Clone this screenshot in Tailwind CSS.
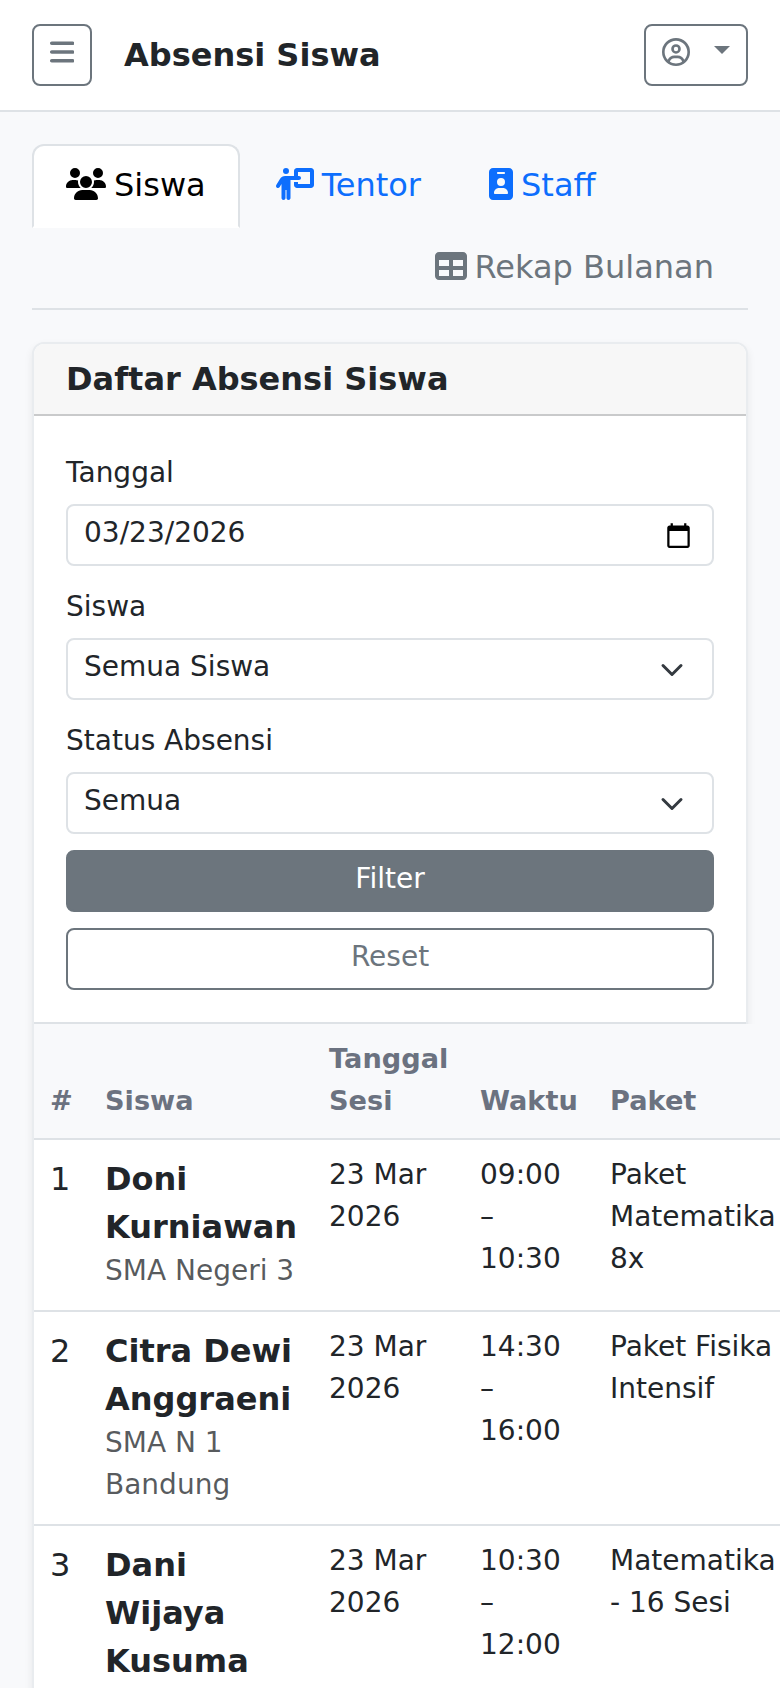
<!DOCTYPE html>
<html lang="id">
  <head>
    <meta charset="UTF-8" />
    <meta name="viewport" content="width=device-width, initial-scale=1.0" />
    <title>Absensi Siswa</title>
    <script src="https://cdn.jsdelivr.net/npm/@tailwindcss/browser@4"></script>
  </head>
  <body
    class="h-[1688px] overflow-hidden bg-[#f8f9fb] font-['DejaVu_Sans',sans-serif] text-[32px] leading-[48px] text-[#212529]"
  >
    <!-- Topbar -->
    <header
      class="flex h-28 items-center justify-between border-b-2 border-[#dee2e6] bg-white px-8"
    >
      <div class="flex items-center gap-8">
        <button
          class="flex h-[62px] w-[60px] justify-center rounded-lg border-2 border-[#6c757d] pt-[11.5px] text-[#6c757d]"
          aria-label="Menu"
        >
          <svg class="h-7 w-[24.5px]" fill="currentColor" viewBox="0 0 448 512">
            <path
              d="M0 96C0 78.3 14.3 64 32 64l384 0c17.7 0 32 14.3 32 32s-14.3 32-32 32L32 128C14.3 128 0 113.7 0 96zM0 256c0-17.7 14.3-32 32-32l384 0c17.7 0 32 14.3 32 32s-14.3 32-32 32L32 288c-17.7 0-32-14.3-32-32zM448 416c0 17.7-14.3 32-32 32L32 448c-17.7 0-32-14.3-32-32s14.3-32 32-32l384 0c17.7 0 32 14.3 32 32z"
            />
          </svg>
        </button>
        <h1 class="font-bold">Absensi Siswa</h1>
      </div>
      <button
        class="flex h-[62px] w-[104px] gap-6 rounded-lg border-2 border-[#6c757d] px-4 pt-[11.5px] text-[#6c757d]"
        aria-label="Akun"
      >
        <svg class="size-7 shrink-0" fill="currentColor" viewBox="0 0 512 512">
          <path
            d="M406.5 399.6C387.4 352.9 341.5 320 288 320l-64 0c-53.5 0-99.4 32.9-118.5 79.6C69.9 362.2 48 311.7 48 256C48 141.1 141.1 48 256 48s208 93.1 208 208c0 55.7-21.9 106.2-57.5 143.6zm-40.1 32.7C334.4 452.4 296.6 464 256 464s-78.4-11.6-110.5-31.7c7.3-36.7 39.7-64.3 78.5-64.3l64 0c38.8 0 71.2 27.6 78.5 64.3zM256 512A256 256 0 1 0 256 0a256 256 0 1 0 0 512zm0-272a40 40 0 1 1 0-80 40 40 0 1 1 0 80zm-88-40a88 88 0 1 0 176 0 88 88 0 1 0 -176 0z"
          />
        </svg>
        <span
          class="mt-[8.5px] h-0 w-0 shrink-0 border-x-8 border-t-8 border-x-transparent border-t-[#6c757d]"
        ></span>
      </button>
    </header>

    <main class="px-8 pt-8">
      <!-- Tabs -->
      <nav class="mb-8 flex flex-wrap border-b-2 border-[#dee2e6]">
        <a
          class="-mb-0.5 flex items-center gap-2 rounded-t-xl border-2 border-[#dee2e6] border-b-white bg-white px-8 pt-[15px] pb-[17px] text-black"
        >
          <svg class="mb-0.5 h-8 w-10" fill="currentColor" viewBox="0 0 640 512">
            <path
              d="M144 0a80 80 0 1 1 0 160A80 80 0 1 1 144 0zM512 0a80 80 0 1 1 0 160A80 80 0 1 1 512 0zM0 298.7C0 239.8 47.8 192 106.7 192l42.7 0c15.9 0 31 3.5 44.6 9.7c-1.3 7.2-1.9 14.7-1.9 22.3c0 38.2 16.8 72.5 43.3 96c-.2 0-.4 0-.7 0L21.3 320C9.6 320 0 310.4 0 298.7zM405.3 320c-.2 0-.4 0-.7 0c26.6-23.5 43.3-57.8 43.3-96c0-7.6-.7-15-1.9-22.3c13.6-6.3 28.7-9.7 44.6-9.7l42.7 0C592.2 192 640 239.8 640 298.7c0 11.8-9.6 21.3-21.3 21.3l-213.3 0zM224 224a96 96 0 1 1 192 0 96 96 0 1 1 -192 0zM128 485.3C128 411.7 187.7 352 261.3 352l117.3 0C452.3 352 512 411.7 512 485.3c0 14.7-11.9 26.7-26.7 26.7l-330.7 0c-14.7 0-26.7-11.9-26.7-26.7z"
            />
          </svg>
          Siswa
        </a>
        <a
          class="-mb-0.5 flex items-center gap-2 border-2 border-transparent px-8 pt-[15px] pb-[17px] text-[#0d6efd]"
        >
          <svg class="mb-0.5 h-8 w-10" fill="currentColor" viewBox="0 0 640 512">
            <path
              d="M192 96a48 48 0 1 0 0-96 48 48 0 1 0 0 96zm-8 384l0-128 16 0 0 128c0 17.7 14.3 32 32 32s32-14.3 32-32l0-288 56 0 64 0 16 0c17.7 0 32-14.3 32-32s-14.3-32-32-32l-16 0 0-64 192 0 0 192-192 0 0-32-64 0 0 48c0 26.5 21.5 48 48 48l224 0c26.5 0 48-21.5 48-48l0-224c0-26.5-21.5-48-48-48L368 0c-26.5 0-48 21.5-48 48l0 80-76.9 0-65.9 0c-33.7 0-64.9 17.7-82.3 46.6l-58.3 97c-9.1 15.1-4.2 34.8 10.9 43.9s34.8 4.2 43.9-10.9L120 256.9 120 480c0 17.7 14.3 32 32 32s32-14.3 32-32z"
            />
          </svg>
          Tentor
        </a>
        <a
          class="-mb-0.5 flex items-center gap-2 border-2 border-transparent px-8 pt-[15px] pb-[17px] text-[#0d6efd]"
        >
          <svg class="mb-0.5 h-8 w-6" fill="currentColor" viewBox="0 0 384 512">
            <path
              d="M64 0C28.7 0 0 28.7 0 64L0 448c0 35.3 28.7 64 64 64l256 0c35.3 0 64-28.7 64-64l0-384c0-35.3-28.7-64-64-64L64 0zm96 320l64 0c44.2 0 80 35.8 80 80c0 8.8-7.2 16-16 16L96 416c-8.8 0-16-7.2-16-16c0-44.2 35.8-80 80-80zm-32-96a64 64 0 1 1 128 0 64 64 0 1 1 -128 0zM144 64l96 0c8.8 0 16 7.2 16 16s-7.2 16-16 16l-96 0c-8.8 0-16-7.2-16-16s7.2-16 16-16z"
            />
          </svg>
          Staff
        </a>
        <a
          class="-mb-0.5 ml-auto flex items-center gap-2 border-2 border-transparent px-8 pt-[15px] pb-[17px] text-[#6c757d]"
        >
          <svg class="mb-0.5 size-8" fill="currentColor" viewBox="0 0 512 512">
            <path
              d="M64 256l0-96 160 0 0 96L64 256zm0 64l160 0 0 96L64 416l0-96zm224 96l0-96 160 0 0 96-160 0zM448 256l-160 0 0-96 160 0 0 96zM64 32C28.7 32 0 60.7 0 96L0 416c0 35.3 28.7 64 64 64l384 0c35.3 0 64-28.7 64-64l0-320c0-35.3-28.7-64-64-64L64 32z"
            />
          </svg>
          Rekap Bulanan
        </a>
      </nav>

      <section
        class="rounded-xl border-2 border-[#e9ecef] bg-white shadow-[0_4px_8px_rgba(0,0,0,0.075)]"
      >
        <h2
          class="h-[72px] rounded-t-[10px] border-b-2 border-[#c9cacb] bg-[#f7f7f7] px-8 py-4 leading-[38px] font-bold"
        >
          Daftar Absensi Siswa
        </h2>

        <!-- Filter form -->
        <form class="px-8 pt-[39px] pb-8 text-[28px] leading-9">
          <label class="mb-[13px] block">Tanggal</label>
          <div
            class="flex h-[62px] justify-between rounded-lg border-2 border-[#dee2e6] pt-[9px] pr-5 pl-4"
          >
            03/23/2026
            <svg
              class="mt-[6.5px] size-[27px] text-black"
              fill="currentColor"
              viewBox="0 0 24 24"
            >
              <path
                d="M20 3h-1V1h-2v2H7V1H5v2H4c-1.1 0-2 .9-2 2v16c0 1.1.9 2 2 2h16c1.1 0 2-.9 2-2V5c0-1.1-.9-2-2-2zm0 18H4V8h16v13z"
              />
            </svg>
          </div>
          <label class="mt-[23px] mb-[13px] block">Siswa</label>
          <div
            class="flex h-[62px] justify-between rounded-lg border-2 border-[#dee2e6] pt-[9px] pr-7 pl-4"
          >
            Semua Siswa
            <svg class="mt-[9px] size-6" fill="none" viewBox="0 0 16 16">
              <path
                d="m2 5 6 6 6-6"
                stroke="#343a40"
                stroke-width="2"
                stroke-linecap="round"
                stroke-linejoin="round"
              />
            </svg>
          </div>
          <label class="mt-[23px] mb-[13px] block">Status Absensi</label>
          <div
            class="flex h-[62px] justify-between rounded-lg border-2 border-[#dee2e6] pt-[9px] pr-7 pl-4"
          >
            Semua
            <svg class="mt-[9px] size-6" fill="none" viewBox="0 0 16 16">
              <path
                d="m2 5 6 6 6-6"
                stroke="#343a40"
                stroke-width="2"
                stroke-linecap="round"
                stroke-linejoin="round"
              />
            </svg>
          </div>
          <button
            type="button"
            class="mt-4 block w-full rounded-lg border-2 border-[#6c757d] bg-[#6c757d] pt-[9px] pb-[13px] text-white"
          >
            Filter
          </button>
          <button
            type="button"
            class="mt-4 block w-full rounded-lg border-2 border-[#6c757d] pt-[9px] pb-[13px] text-[#6c757d]"
          >
            Reset
          </button>
        </form>

        <!-- Attendance list -->
        <div class="w-[712px] border-t-2 border-[#dee2e6]">
          <table
            class="w-[860px] table-fixed border-separate border-spacing-0 bg-white text-left"
          >
            <colgroup>
              <col class="w-[55px]" />
              <col class="w-[224px]" />
              <col class="w-[151px]" />
              <col class="w-[130px]" />
              <col class="w-[300px]" />
            </colgroup>
            <thead class="bg-[#f8f9fb] text-[27.2px] leading-[42px] text-[#6b7280]">
              <tr class="h-[116px] align-bottom *:border-b-2 *:border-[#dee2e6] *:px-4 *:pb-4">
                <th>#</th>
                <th>Siswa</th>
                <th>Tanggal<br />Sesi</th>
                <th>Waktu</th>
                <th>Paket</th>
              </tr>
            </thead>
            <tbody class="align-top">
              <tr class="h-[172px] *:border-b-2 *:border-[#dee2e6] *:px-4">
                <td class="pt-[15px]">1</td>
                <td class="pt-[15px]">
                  <div class="font-bold">Doni<br />Kurniawan</div>
                  <div class="-mt-px text-[28px] leading-[42px] text-[#212529]/75">
                    SMA Negeri 3
                  </div>
                </td>
                <td class="pt-3.5 text-[28px] leading-[42px]">23 Mar<br />2026</td>
                <td class="pt-3.5 text-[28px] leading-[42px]">09:00<br />–<br />10:30</td>
                <td class="pt-3.5 text-[28px] leading-[42px]">Paket<br />Matematika<br />8x</td>
              </tr>
              <tr class="h-[214px] *:border-b-2 *:border-[#dee2e6] *:px-4">
                <td class="pt-[15px]">2</td>
                <td class="pt-[15px]">
                  <div class="font-bold">Citra Dewi<br />Anggraeni</div>
                  <div class="-mt-px text-[28px] leading-[42px] text-[#212529]/75">
                    SMA N 1<br />Bandung
                  </div>
                </td>
                <td class="pt-3.5 text-[28px] leading-[42px]">23 Mar<br />2026</td>
                <td class="pt-3.5 text-[28px] leading-[42px]">14:30<br />–<br />16:00</td>
                <td class="pt-3.5 text-[28px] leading-[42px]">Paket Fisika<br />Intensif</td>
              </tr>
              <tr class="h-[220px] *:border-b-2 *:border-[#dee2e6] *:px-4">
                <td class="pt-[15px]">3</td>
                <td class="pt-[15px]">
                  <div class="font-bold">Dani<br />Wijaya<br />Kusuma</div>
                </td>
                <td class="pt-3.5 text-[28px] leading-[42px]">23 Mar<br />2026</td>
                <td class="pt-3.5 text-[28px] leading-[42px]">10:30<br />–<br />12:00</td>
                <td class="pt-3.5 text-[28px] leading-[42px]">Matematika<br />- 16 Sesi</td>
              </tr>
            </tbody>
          </table>
        </div>
      </section>
    </main>
  </body>
</html>
